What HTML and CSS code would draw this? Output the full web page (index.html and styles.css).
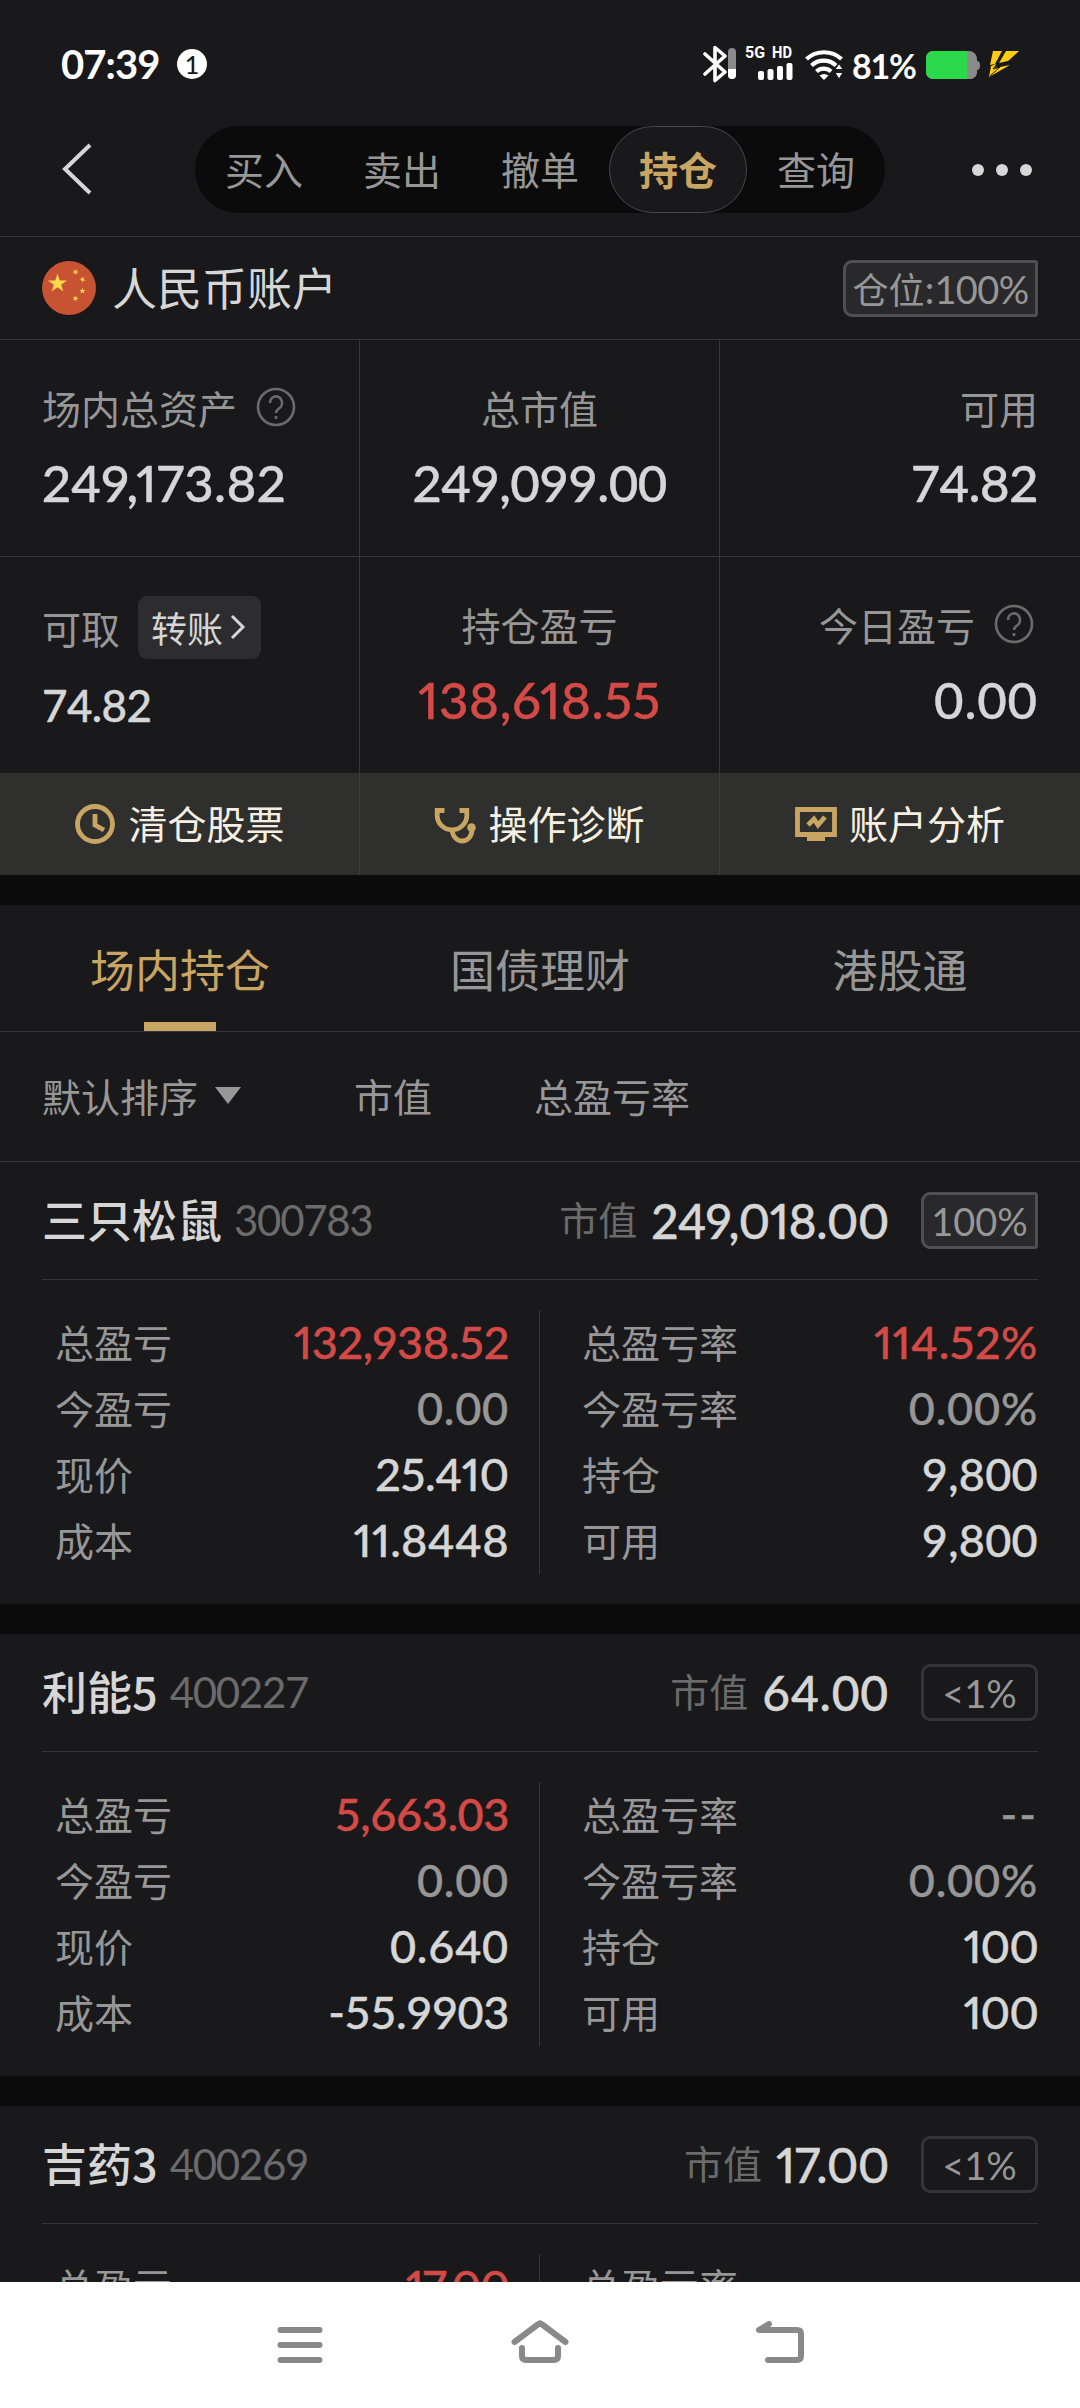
FILE: index.html
```html
<!DOCTYPE html>
<html lang="zh-CN">
<head>
<meta charset="utf-8">
<title>持仓</title>
<link rel="stylesheet" href="styles.css">
</head>
<body>
<div class="screen">
  <div class="status">
    <span class="clock">07:39</span>
    <span class="notice">1</span>
    <svg class="status-icons" viewBox="0 -8 162 50" width="162" height="50">
      <path d="M2 10 L22 28 L12 36.500 V3.500 L22 12 L2 30" fill="none" stroke="#fff" stroke-width="3.600" stroke-linejoin="round" stroke-linecap="round"/>
      <rect x="25" y="4" width="8" height="31" rx="4" fill="#8b8b8b"/>
      <path d="M25 25h8v6a4 4 0 0 1-8 0z" fill="#fff"/>
      <text x="42" y="14" class="net" textLength="20" lengthAdjust="spacingAndGlyphs">5G</text>
      <text x="69" y="14" class="net" textLength="20" lengthAdjust="spacingAndGlyphs">HD</text>
      <g fill="#fff"><rect x="55" y="27" width="6" height="9" rx="2"/><rect x="64.500" y="25" width="6" height="11" rx="2"/><rect x="74" y="22" width="6" height="14" rx="2"/><rect x="83.500" y="19" width="6" height="17" rx="2"/></g>
      <g fill="none" stroke="#fff" stroke-width="4.200"><path d="M103.500 15a26 26 0 0 1 35 0"/><path d="M108.500 21.500a18 18 0 0 1 24.500 0"/><path d="M113.500 27.500a10.500 10.500 0 0 1 14.500 0"/></g>
      <path d="M116.500 31.500q4.500-3 9 0L121 36z" fill="#fff"/>
      <path d="M132 25.500l4-6 4 6zM132 28.500h8l-4 6.500z" fill="#fff" stroke="#19191b" stroke-width="1"/>
    </svg>
    <span class="percent">81%</span>
    <svg class="battery" viewBox="0 0 94 30" width="94" height="30">
      <path d="M8 1h36a8 8 0 0 1 8 8v2q3 0 3 4v1q0 4-3 4v1a7 7 0 0 1-8 8H8a7 7 0 0 1-7-7V8a7 7 0 0 1 7-7z" fill="#8b8b8b"/>
      <path d="M8 1h34v28H8a7 7 0 0 1-7-7V8a7 7 0 0 1 7-7z" fill="#2bd94a"/>
      <path d="M68 1h9l-7 13-5 1zM81 1h13L83 11l-9 2zM64 27l2-11 5-2-1 4 15-3z" fill="#fc1"/>
      <path d="M72 14l-4 5 7-2-10 9" stroke="#19191b" stroke-width="1" fill="none"/>
    </svg>
  </div>

  <div class="topbar">
    <svg class="back" viewBox="0 0 34 54" width="34" height="54"><path d="M30 3 L5 27 L30 51" fill="none" stroke="#d6d6d6" stroke-width="4"/></svg>
    <div class="segments">
      <span>买入</span><span>卖出</span><span>撤单</span><span class="on">持仓</span><span>查询</span>
    </div>
    <div class="more"><i></i><i></i><i></i></div>
  </div>

  <div class="account">
    <svg class="flag" viewBox="0 0 54 54" width="54" height="54">
      <circle cx="27" cy="27" r="27" fill="#c85332"/>
      <defs><polygon id="star" points="0,-10 2.250,-3.100 9.500,-3.100 3.630,1.180 5.880,8.090 0,3.820 -5.880,8.090 -3.630,1.180 -9.500,-3.100 -2.250,-3.100"/></defs>
      <g fill="#fcd94c"><use href="#star" x="15.500" y="22.500"/><use href="#star" transform="translate(33.500 11) rotate(20) scale(.32)"/><use href="#star" transform="translate(40.500 18.500) rotate(45) scale(.32)"/><use href="#star" transform="translate(40.500 30) scale(.32)"/><use href="#star" transform="translate(33.500 37.500) rotate(20) scale(.32)"/></g>
    </svg>
    <span class="account-name">人民币账户</span>
    <span class="badge full ratio">仓位:<b>100%</b></span>
  </div>

  <div class="summary">
    <div class="cell"><div class="label">场内总资产<svg class="help" viewBox="0 0 40 40" width="40" height="40"><circle cx="20" cy="20" r="18" /><path d="M14 16a6 6.500 0 1 1 9 5.500q-3 2-3 4.500M20 29v3"/></svg></div><div class="num prop loose">249,173.82</div></div>
    <div class="cell mid"><div class="label">总市值</div><div class="num">249,099.00</div></div>
    <div class="cell end"><div class="label">可用</div><div class="num">74.82</div></div>
    <div class="cell"><div class="label withdraw">可取<span class="transfer">转账<svg viewBox="0 0 18 28" width="18" height="28"><path d="M3 3l11 11L3 25" fill="none" stroke="#d6d6d6" stroke-width="3"/></svg></span></div><div class="num small">74.82</div></div>
    <div class="cell mid"><div class="label">持仓盈亏</div><div class="num red prop looser">138,618.55</div></div>
    <div class="cell end"><div class="label">今日盈亏<svg class="help inset" viewBox="0 0 40 40" width="40" height="40"><circle cx="20" cy="20" r="18"/><path d="M14 16a6 6.500 0 1 1 9 5.500q-3 2-3 4.500M20 29v3"/></svg></div><div class="num zero">0.00</div></div>
  </div>

  <div class="tools">
    <div class="tool"><svg viewBox="0 0 42 42" width="42" height="42"><circle cx="21" cy="21" r="17.500"/><path d="M21 11v11l9 5"/></svg>清仓股票</div>
    <div class="tool"><svg viewBox="0 0 42 42" width="42" height="42"><path d="M10.500 7.500H3.200v5a14.800 14.300 0 0 0 29.600 0v-5h-7.300M18 27c1 7 5 11 10.500 11S38 33 38 26"/><circle class="solid" cx="37.500" cy="24.500" r="4.300"/></svg>操作诊断</div>
    <div class="tool"><svg viewBox="0 0 42 42" width="42" height="42"><path d="M2.500 6.500h37v25h-37z"/><path class="solid" d="M12 32h18v6H12z"/><path d="M13 22l6-6 4 6 7-8"/></svg>账户分析</div>
  </div>

  <div class="tabs"><div class="tab on">场内持仓</div><div class="tab">国债理财</div><div class="tab">港股通</div></div>
  <div class="sort"><span class="by">默认排序<i></i></span><span class="value">市值</span><span>总盈亏率</span></div>

  <div class="holding">
    <div class="head"><span class="name">三只松鼠</span><span class="code">300783</span><span class="mv">市值</span><span class="amount prop snug">249,018.00</span><span class="badge full"><b>100%</b></span></div>
    <div class="detail">
      <div class="col"><p>总盈亏<b class="red prop">132,938.52</b></p><p>今盈亏<b class="dim zero">0.00</b></p><p>现价<b class="prop">25.410</b></p><p>成本<b class="prop loose">11.8448</b></p></div>
      <div class="col"><p>总盈亏率<b class="red prop looser">114.52%</b></p><p>今盈亏率<b class="dim zero">0.00%</b></p><p>持仓<b class="loose">9,800</b></p><p>可用<b class="loose">9,800</b></p></div>
    </div>
  </div>
  <div class="holding">
    <div class="head"><span class="name">利能5</span><span class="code">400227</span><span class="mv">市值</span><span class="amount zero">64.00</span><span class="badge"><b>&lt;1%</b></span></div>
    <div class="detail">
      <div class="col"><p>总盈亏<b class="red">5,663.03</b></p><p>今盈亏<b class="dim zero">0.00</b></p><p>现价<b class="zero">0.640</b></p><p>成本<b>-55.9903</b></p></div>
      <div class="col"><p>总盈亏率<b class="dim dashes">--</b></p><p>今盈亏率<b class="dim zero">0.00%</b></p><p>持仓<b class="prop tight">100</b></p><p>可用<b class="prop tight">100</b></p></div>
    </div>
  </div>
  <div class="holding">
    <div class="head"><span class="name">吉药3</span><span class="code">400269</span><span class="mv">市值</span><span class="amount prop snug">17.00</span><span class="badge"><b>&lt;1%</b></span></div>
    <div class="detail">
      <div class="col"><p>总盈亏<b class="red prop tight">17.00</b></p></div>
      <div class="col"><p>总盈亏率</p></div>
    </div>
  </div>

  <div class="navbar">
    <svg viewBox="0 0 60 60" width="60" height="60"><path d="M10.500 15h39M10.500 30h39M10.500 45h39"/></svg>
    <svg viewBox="0 0 60 60" width="60" height="60"><path d="M4.500 27L28.500 9q1.500-1.500 3 0l24 18M12 33v8q0 4 4 4h28q4 0 4-4v-8"/></svg>
    <svg viewBox="0 0 60 60" width="60" height="60"><path d="M19 9L9 15h38q4 0 4 4v22q0 4-4 4H18"/></svg>
  </div>
</div>
</body>
</html>
```
FILE: styles.css
```css
* { box-sizing: border-box; margin: 0; padding: 0; }
body { background: #19191b; }
.screen {
  --line: #363638;
  --gap: #0b0b0b;
  --gold: #c9a563;
  width: 1080px; height: 2408px; overflow: hidden;
  display: flex; flex-direction: column;
  background: #19191b; color: #d6d6d6;
  font: 400 39px/56px "Noto Sans CJK SC", sans-serif;
}
.screen > * { flex: none; }
svg { flex: none; display: block; }
b, .num, .code, .amount, .clock, .percent, .notice {
  font-family: Lato, sans-serif; font-weight: 500;
  font-feature-settings: "tnum";
}
.num, .amount, .col b { letter-spacing: -.4px; -webkit-text-stroke: .4px currentColor; }
.num { letter-spacing: -.6px; }
.num.prop, .amount.prop, .col .prop { font-feature-settings: "pnum"; letter-spacing: -.2px; }
.num.loose, .col .loose { letter-spacing: .3px; }
.num.looser, .col .looser { letter-spacing: .6px; }
.num.zero, .amount.zero, .col .zero { letter-spacing: .8px; }
.amount.snug { letter-spacing: -.5px; }
.amount.tight, .col .tight { letter-spacing: -1px; }

.status { height: 116px; padding: 14px 61px 0 61px; display: flex; align-items: center; color: #fff; }
.clock { font-size: 40px; font-weight: 700; width: 116px; letter-spacing: -.9px; padding-bottom: 2px; }
.notice { width: 30px; height: 30px; border-radius: 50%; background: #fff; color: #19191b; font-size: 25px; line-height: 30px; text-align: center; margin-bottom: 2px; }
.status-icons { margin: 0 0 8px 496px; }
.net { font: 700 17px Roboto, sans-serif; fill: #fff; }
.percent { font-size: 34px; font-weight: 700; margin-left: -13px; padding-top: 2px; width: 71px; letter-spacing: -1.200px; }
.battery { margin-left: auto; }

.topbar { height: 121px; padding: 10px 48px 24px 60px; display: flex; align-items: flex-start; border-bottom: 1px solid var(--line); }
.back { margin-top: 16px; }
.segments { margin-left: 101px; width: 690px; height: 87px; border-radius: 44px; background: #0b0b0b; display: flex; color: #979797; }
.segments span { width: 138px; line-height: 84px; text-align: center; }
.segments .on { background: #19191b; border: 1px solid #48484a; line-height: 82px; border-radius: 44px; color: var(--gold); font-weight: 700; }
.more { margin: 38px 0 0 auto; display: flex; gap: 12px; }
.more i { width: 12px; height: 12px; border-radius: 50%; background: #d6d6d6; }

.account { height: 103px; padding: 0 42px; display: flex; align-items: center; border-bottom: 1px solid var(--line); }
.account-name { font-size: 45px; margin-left: 16px; padding-bottom: 3px; }
.badge { height: 57px; min-width: 117px; border: 3px solid #353537; border-radius: 9px; font-size: 36px; line-height: 50px; text-align: center; color: #979797; }
.badge b { font-size: 38px; font-weight: 400; }
.badge.full { background: #29292b; border-color: #505052; border-top-right-radius: 3px; border-bottom-right-radius: 3px; }
.ratio { margin-left: auto; width: 195px; }
.ratio b { letter-spacing: -.6px; }

.summary { display: grid; grid-template-columns: 360px 360px 360px; grid-template-rows: 217px 216px; }
.cell { padding: 38px 42px 0; border-right: 1px solid var(--line); display: flex; flex-direction: column; }
.cell:nth-child(-n+3) { border-bottom: 1px solid var(--line); }
.cell:nth-child(3n) { border-right: 0; }
.mid { align-items: center; }
.end { align-items: flex-end; }
.label { height: 58px; display: flex; align-items: center; color: #979797; }
.num { font-size: 51px; line-height: 60px; margin-top: 17px; }
.num.small { font-size: 44px; margin-top: 16px; }
.help { margin-left: 19px; fill: none; stroke: #6b6b6b; stroke-width: 2.600; }
.help.inset { margin-right: 4px; }
.withdraw { height: 64px; }
.transfer { margin-left: 18px; height: 63px; width: 123px; padding-left: 13px; border-radius: 9px; background: #2d2d2f; color: #d6d6d6; font-size: 36px; display: flex; align-items: center; gap: 6px; }
.red { color: #d44a47; }

.tools { height: 102px; display: flex; background: #2f2f2d; }
.tool { width: 360px; padding-bottom: 4px; border-right: 1px solid #3b3b3b; display: flex; align-items: center; justify-content: center; gap: 12px; color: #f7efe2; }
.tool:last-child { border-right: 0; }
.tool svg { margin-top: 4px; fill: none; stroke: var(--gold); stroke-width: 4.800; }
.tool .solid { fill: var(--gold); stroke: none; }

.tabs { height: 157px; display: flex; border-top: 30px solid var(--gap); border-bottom: 1px solid var(--line); }
.tab { width: 360px; text-align: center; font-size: 45px; line-height: 127px; color: #979797; }
.tab.on { color: var(--gold); background: linear-gradient(var(--gold), var(--gold)) center bottom / 72px 9px no-repeat; }

.sort { height: 130px; padding: 0 0 4px 42px; display: flex; align-items: center; color: #979797; border-bottom: 1px solid var(--line); }
.by { width: 312px; display: flex; align-items: center; gap: 17px; }
.by i { margin-top: 2px; border: 13px solid transparent; border-top: 17px solid #979797; border-bottom: 0; }
.value { width: 180px; }

.holding { height: 472px; padding: 0 42px; border-bottom: 30px solid var(--gap); }
.head { height: 118px; display: flex; align-items: center; border-bottom: 1px solid var(--line); }
.name { font-size: 45px; font-weight: 500; padding-bottom: 3px; }
.code { font-size: 42px; font-weight: 400; color: #6b6b6b; margin-left: 12px; padding-bottom: 2px; letter-spacing: -1.300px; }
.mv { margin-left: auto; color: #6b6b6b; padding-bottom: 5px; }
.amount { font-size: 48px; margin: 0 32px 0 14px; }
.detail { display: grid; grid-template-columns: 498px 498px; padding-top: 30px; }
.col { height: 264px; padding: 0 31px 0 13px; }
.col + .col { padding: 0 0 0 42px; border-left: 1px solid var(--line); margin-left: -1px; }
.col p { height: 66px; padding-bottom: 5px; display: flex; justify-content: space-between; align-items: center; color: #979797; }
.col b { font-size: 45px; padding-top: 3px; color: #d6d6d6; }
.col .red { color: #d44a47; }
.col .dim { color: #979797; }
.col .dashes { letter-spacing: 2px; }

.navbar { margin-top: -296px; height: 126px; background: #fff; padding: 0 270px; display: flex; justify-content: space-between; align-items: center; position: relative; }
.navbar svg { fill: none; stroke: #898989; stroke-width: 6; stroke-linecap: round; stroke-linejoin: round; }
```
